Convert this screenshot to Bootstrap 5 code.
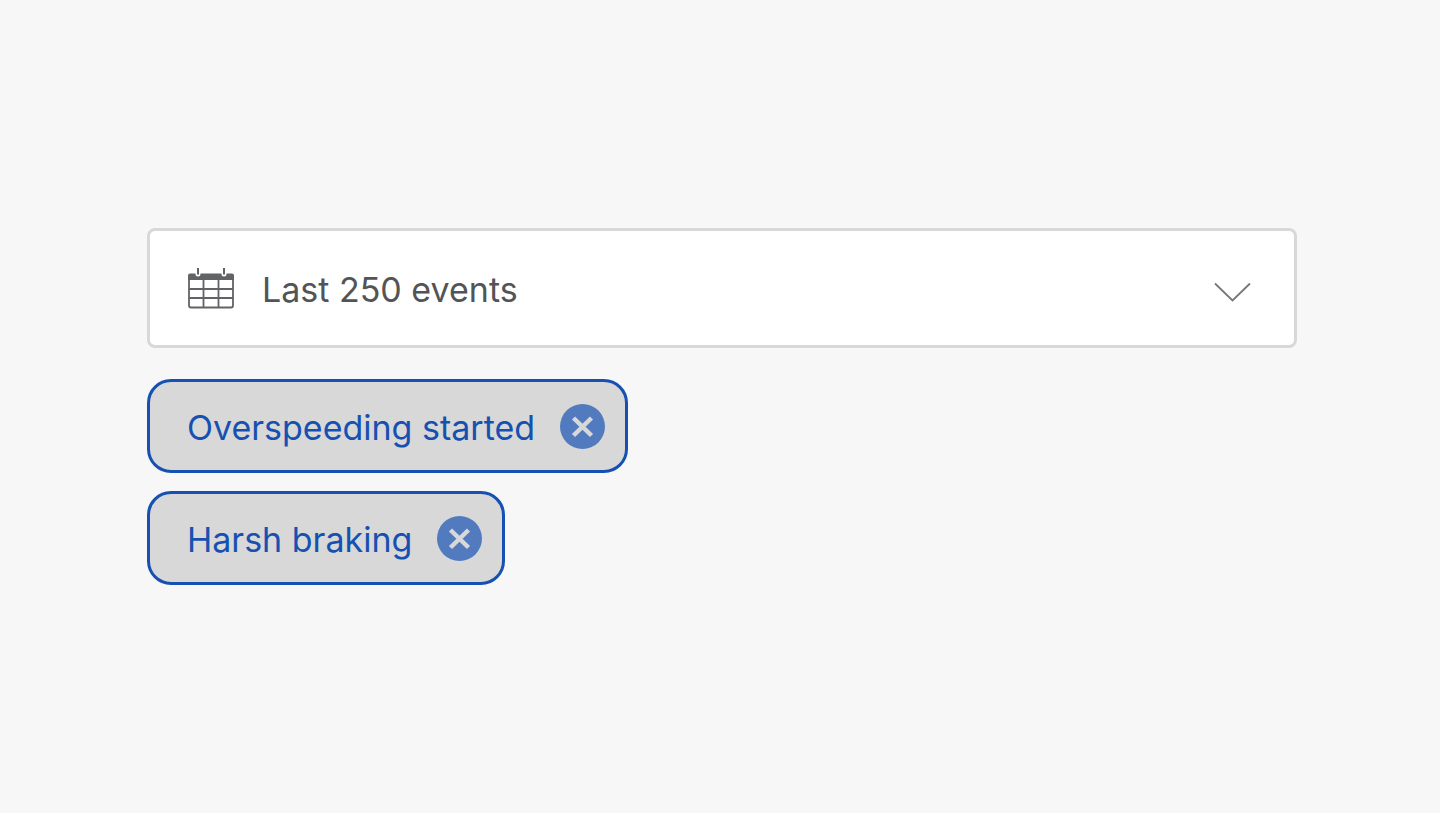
<!DOCTYPE html>
<html lang="en">
<head>
<meta charset="utf-8">
<meta name="viewport" content="width=device-width, initial-scale=1">
<title>Event filter</title>
<link href="https://cdn.jsdelivr.net/npm/bootstrap@5.3.0/dist/css/bootstrap.min.css" rel="stylesheet">
<style>
  body { background: #f7f7f7; font-family: Inter, "Liberation Sans", sans-serif; font-size: 34px; line-height: 48px; }
  .filter-panel { padding: 0 143px 0 147px; }
  .event-filters { margin-top: 31px; gap: 18px; }
  .range-picker { display: grid; align-items: center; }
  .range-picker > * { grid-area: 1 / 1; }
  .range-picker .form-select {
    height: 120px; padding: 4px 96px 0 112px; font-size: 34px; line-height: 48px;
    color: #535456; background: #fff none; border: 3px solid #d8d8d8; border-radius: 8px;
  }
  .range-picker svg { pointer-events: none; z-index: 1; }
  .calendar-icon { margin-left: 40px; }
  .chevron-icon { justify-self: end; margin-right: 46px; margin-top: 8px; }
  .filter-chip {
    height: 94px; padding: 0 20px 0 37px; gap: 25px;
    color: #1651b2; background: #d8d8d8; border: 3px solid #1651b2; border-radius: 24px;
  }
  .filter-chip span { padding-top: 4px; }
  .chip-remove { width: 45px; height: 45px; background: #527abf; color: #d8d8d8; border: 0; }
</style>
</head>
<body>
<main class="filter-panel min-vh-100 d-flex flex-column justify-content-center">
  <div class="range-picker">
    <select class="form-select" id="event-range" aria-label="Event range">
      <option selected>Last 250 events</option>
      <option>Last 500 events</option>
    </select>
    <svg class="calendar-icon" width="48" height="42" viewBox="0 0 48 42" fill="none" stroke="#626366" aria-hidden="true">
      <path d="M3 6.500h42q2 0 2 2V13H1V8.500q0-2 2-2z" fill="#626366" stroke="none"/>
      <path d="M11 4v3M37 4v3" stroke="#fff" stroke-width="5" stroke-linecap="round"/>
      <path d="M11 1v6.500M37 1v6.500" stroke-width="2"/>
      <path d="M2 12v26.500q0 2 2 2h40q2 0 2-2V12M2 22h44M2 31h44M16.500 12v28M31.500 12v28" stroke-width="1.800"/>
    </svg>
    <svg class="chevron-icon" width="38" height="22" viewBox="0 0 38 22" fill="none" stroke="#777" stroke-width="1.800" aria-hidden="true">
      <path d="M2 2.500l17.500 17L37 2.500"/>
    </svg>
  </div>
  <ul class="event-filters list-unstyled d-flex flex-column align-items-start mb-0">
    <li class="filter-chip d-flex align-items-center">
      <span>Overspeeding started</span>
      <button class="chip-remove rounded-circle p-0 d-flex" type="button" aria-label="Remove Overspeeding started">
        <svg width="45" height="45" viewBox="0 0 45 45" fill="none" stroke="currentColor" stroke-width="4.500" aria-hidden="true"><path d="M13.500 14l18 17.500M31.500 14l-18 17.500"/></svg>
      </button>
    </li>
    <li class="filter-chip d-flex align-items-center">
      <span>Harsh braking</span>
      <button class="chip-remove rounded-circle p-0 d-flex" type="button" aria-label="Remove Harsh braking">
        <svg width="45" height="45" viewBox="0 0 45 45" fill="none" stroke="currentColor" stroke-width="4.500" aria-hidden="true"><path d="M13.500 14l18 17.500M31.500 14l-18 17.500"/></svg>
      </button>
    </li>
  </ul>
</main>
<script src="https://cdn.jsdelivr.net/npm/bootstrap@5.3.0/dist/js/bootstrap.bundle.min.js"></script>
</body>
</html>
